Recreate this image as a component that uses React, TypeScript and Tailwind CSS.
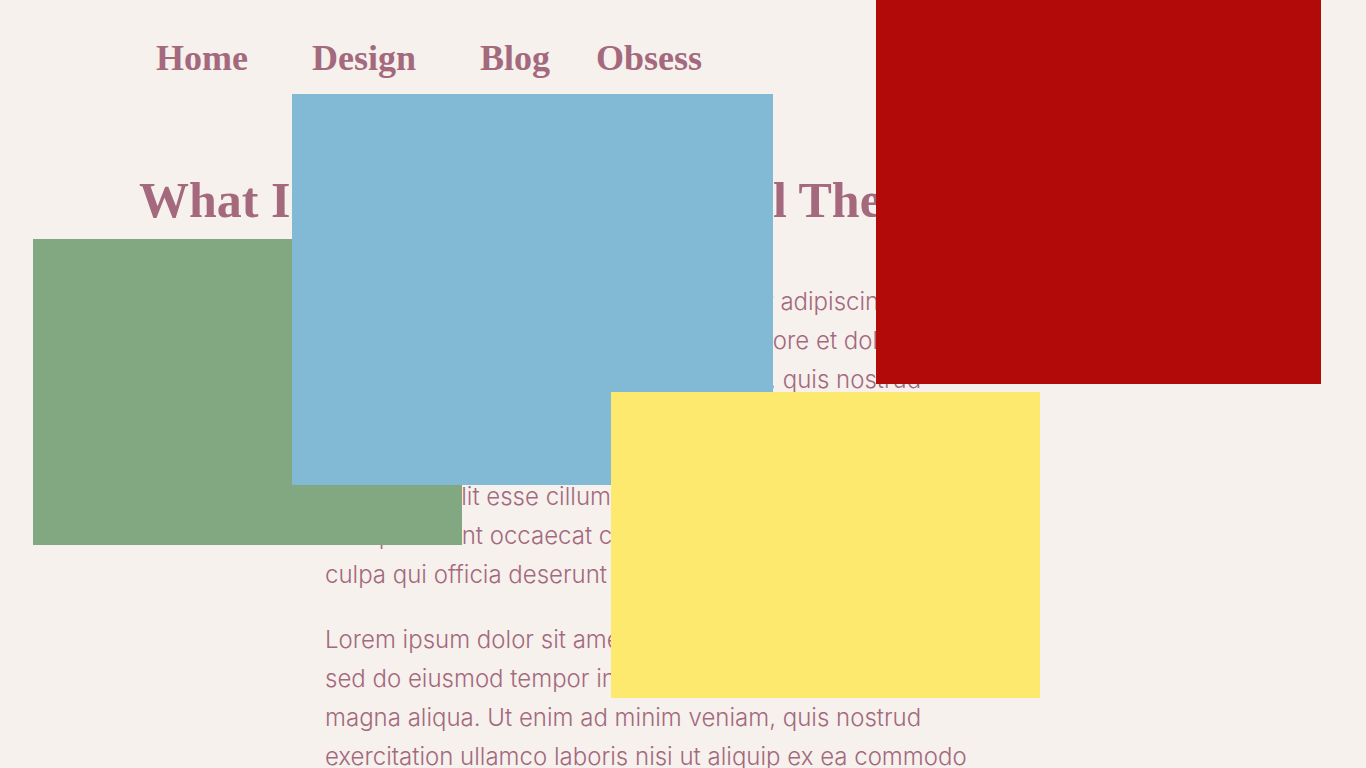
const links = ["Home", "Design", "Blog", "Obsess"];

const paragraph =
  "Lorem ipsum dolor sit amet, consectetur adipiscing elit, sed do eiusmod tempor incididunt ut labore et dolore magna aliqua. Ut enim ad minim veniam, quis nostrud exercitation ullamco laboris nisi ut aliquip ex ea commodo consequat. Duis aute irure dolor in reprehenderit in voluptate velit esse cillum dolore eu fugiat nulla pariatur. Excepteur sint occaecat cupidatat non proident, sunt in culpa qui officia deserunt mollit anim id est laborum.";

export default function App() {
  return (
    <div className="relative h-screen overflow-hidden bg-[#f6f1ed] text-[#a4697d]">
      <header className="pt-9 pl-39">
        <nav aria-label="Main">
          <ul className="flex gap-[46px] font-['Liberation_Serif',serif] text-[36px] leading-[44px] font-bold">
            {links.map((label, i) => (
              <li key={label} className={i < 2 ? "pr-[18px]" : ""}>
                <a href={`#${label.toLowerCase()}`}>{label}</a>
              </li>
            ))}
          </ul>
        </nav>
      </header>

      <main className="flex flex-col gap-13 pt-[90px]">
        <h1 className="pl-[139px] font-['Liberation_Serif',serif] text-[50px] leading-[60px] font-bold whitespace-nowrap">
          What Is The Cause Behind All These Squares?
        </h1>
        <div className="mx-auto w-full max-w-[716px]">
          <article className="flex max-w-[646px] flex-col gap-[26px] font-[Inter,sans-serif] text-[24px] leading-[39px] font-light">
            <p>{paragraph}</p>
            <p>{paragraph}</p>
          </article>
        </div>
      </main>

      {/* Overlapping colour blocks, in stacking order */}
      <div aria-hidden="true">
        <div className="absolute top-[239px] left-[33px] h-[306px] w-[429px] bg-[#82a881]" />
        <div className="absolute top-[94px] left-[292px] h-[391px] w-[481px] bg-[#82b9d5]" />
        <div className="absolute top-0 left-[876px] h-96 w-[445px] bg-[#b10a09]" />
        <div className="absolute top-[392px] left-[611px] h-[306px] w-[429px] bg-[#fde96e]" />
      </div>
    </div>
  );
}
